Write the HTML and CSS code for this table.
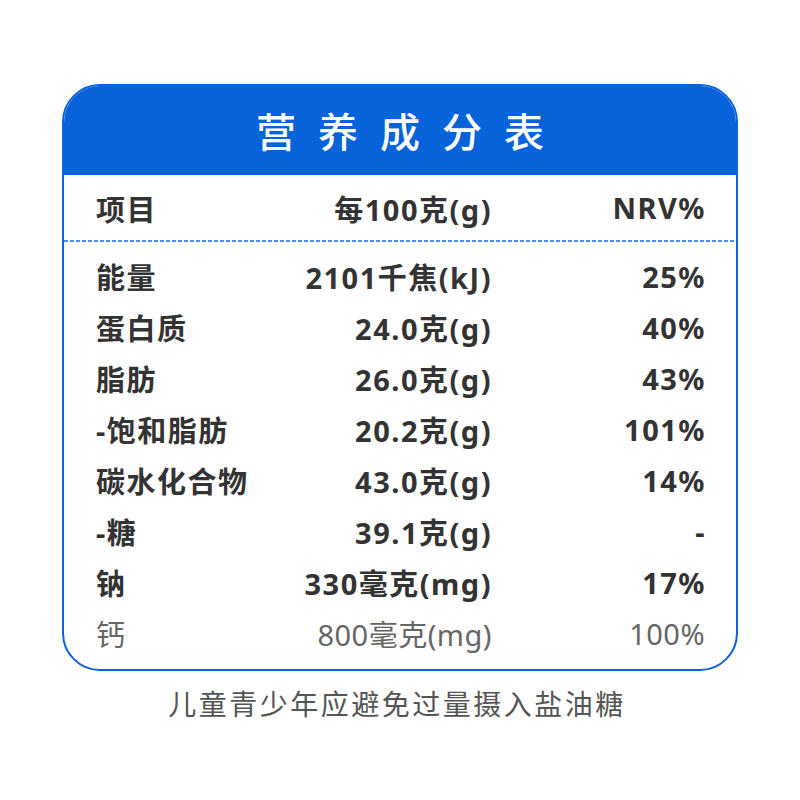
FILE: index.html
```html
<!DOCTYPE html>
<html lang="zh-CN">
<head>
<meta charset="utf-8">
<link rel="stylesheet" href="styles.css">
</head>
<body>
<div class="page">
  <div class="card">
    <div class="card-head">营养成分表</div>
    <div class="table-head">
      <div class="c1">项目</div>
      <div class="c2">每100克(g)</div>
      <div class="c3">NRV%</div>
    </div>
    <div class="divider"></div>
    <div class="table-body">
      <div class="row"><div class="c1">能量</div><div class="c2">2101千焦(kJ)</div><div class="c3">25%</div></div>
      <div class="row"><div class="c1">蛋白质</div><div class="c2">24.0克(g)</div><div class="c3">40%</div></div>
      <div class="row"><div class="c1">脂肪</div><div class="c2">26.0克(g)</div><div class="c3">43%</div></div>
      <div class="row"><div class="c1">-饱和脂肪</div><div class="c2">20.2克(g)</div><div class="c3">101%</div></div>
      <div class="row"><div class="c1">碳水化合物</div><div class="c2">43.0克(g)</div><div class="c3">14%</div></div>
      <div class="row"><div class="c1">-糖</div><div class="c2">39.1克(g)</div><div class="c3">-</div></div>
      <div class="row"><div class="c1">钠</div><div class="c2">330毫克(mg)</div><div class="c3">17%</div></div>
      <div class="row light"><div class="c1">钙</div><div class="c2">800毫克(mg)</div><div class="c3">100%</div></div>
    </div>
  </div>
  <div class="note">儿童青少年应避免过量摄入盐油糖</div>
</div>
</body>
</html>
```

FILE: styles.css
```css
* { box-sizing: border-box; }
html, body { margin: 0; padding: 0; background: #fff; }
body {
  font-family: "Noto Sans", "Noto Sans CJK SC", sans-serif;
  color: #333;
}
.page {
  width: 800px;
  padding-top: 84px;
  display: flex;
  flex-direction: column;
  align-items: center;
}
.card {
  width: 676px;
  border: 2px solid #0a63d9;
  border-radius: 38px;
  overflow: hidden;
}
.card-head {
  background: #0663da;
  color: #fff;
  font-family: "Noto Sans CJK SC", sans-serif;
  font-size: 40px;
  font-weight: 500;
  letter-spacing: 22px;
  padding-left: 22px;
  display: flex;
  align-items: center;
  justify-content: center;
  margin: -2px -2px 0;
  height: 91px;
}
.table-head, .row {
  display: grid;
  grid-template-columns: 180px 216px 1fr;
  padding: 0 30px 0 32px;
  font-size: 29px;
  font-weight: 700;
  letter-spacing: 1.5px;
  align-items: center;
  white-space: nowrap;
}
.table-head { height: 65px; }
.divider {
  height: 1.5px;
  background-image: repeating-linear-gradient(to right, #4a8fe8 0 4px, transparent 4px 6px);
}
.c2, .c3 { text-align: right; }
.table-body { padding: 9px 0 10px; }
.row { height: 51px; }
.row.light {
  font-weight: 400;
  color: #666;
  letter-spacing: 0.5px;
  padding-right: 31px;
}
.note {
  margin-top: 14px;
  font-family: "Noto Sans CJK SC", sans-serif;
  font-size: 28px;
  letter-spacing: 2.5px;
  padding-right: 6px;
  color: #555;
  line-height: 36px;
}
```
